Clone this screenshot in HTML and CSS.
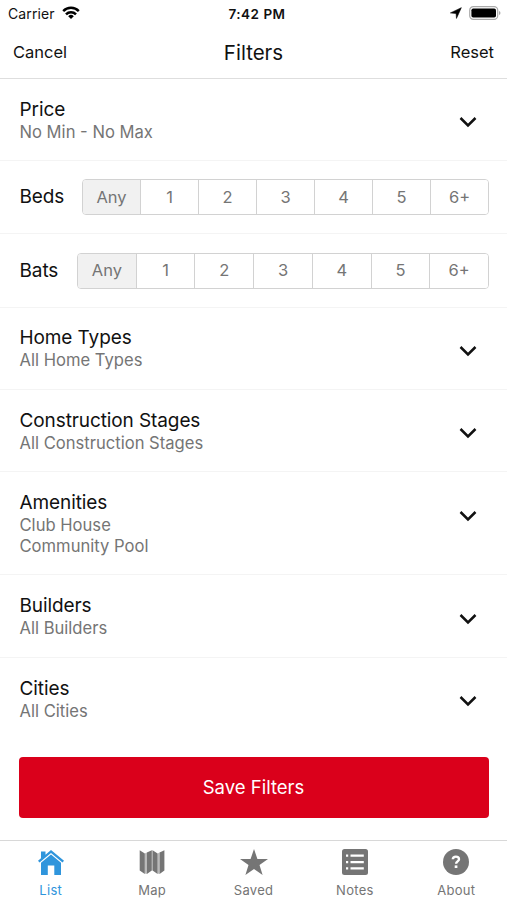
FILE: index.html
```html
<!DOCTYPE html>
<html lang="en">
<head>
    <meta charset="UTF-8">
    <meta name="viewport" content="width=device-width, initial-scale=1.0">
    <title>Filters</title>
    <link rel="stylesheet" href="styles.css">
</head>
<body>
    <div class="status-bar">
        <div class="carrier">
            <span>Carrier</span>
            <svg width="18" height="14" viewBox="0 0 18 14" fill="none" stroke="#000" stroke-width="2.5">
                <path d="M1.2 5.1a11 11 0 0 1 15.6 0"/>
                <path d="M4 8.3a7 7 0 0 1 10 0"/>
                <path d="M9 13 6.2 10.2a4 4 0 0 1 5.6 0z" fill="#000" stroke="none"/>
            </svg>
        </div>
        <div class="time">7:42 PM</div>
        <div class="indicators">
            <svg width="12" height="12" viewBox="0 0 13 12"><path d="M12.3.2 7 11.9 6.600 6.600.4 5.9z" stroke="#000" stroke-width=".6"/></svg>
            <svg width="32" height="14" viewBox="0 0 32 14">
                <rect x=".7" y=".7" width="28" height="12.6" rx="3.6" fill="#fff" stroke="#aaa" stroke-width="1.2"/>
                <rect x="2.4" y="2.4" width="24.6" height="9.2" rx="1.8"/>
                <path d="M30 5v4q1.5-.6 1.5-2T30 5z" fill="#aaa"/>
            </svg>
        </div>
    </div>

    <header class="navbar">
        <a class="nav-link">Cancel</a>
        <h1>Filters</h1>
        <a class="nav-link right">Reset</a>
    </header>

    <main class="filters">
        <div class="row">
            <div class="label">
                <h2>Price</h2>
                <p>No Min - No Max</p>
            </div>
            <svg class="chevron" viewBox="0 0 18 12"><path d="m1.5 2 7.5 7.5L16.5 2"/></svg>
        </div>
        <div class="row row-segment">
            <h2 class="beds">Beds</h2>
            <div class="segment">
                <button class="active">Any</button>
                <button>1</button>
                <button>2</button>
                <button>3</button>
                <button>4</button>
                <button>5</button>
                <button>6+</button>
            </div>
        </div>
        <div class="row row-segment">
            <h2 class="bats">Bats</h2>
            <div class="segment">
                <button class="active">Any</button>
                <button>1</button>
                <button>2</button>
                <button>3</button>
                <button>4</button>
                <button>5</button>
                <button>6+</button>
            </div>
        </div>
        <div class="row">
            <div class="label">
                <h2>Home Types</h2>
                <p>All Home Types</p>
            </div>
            <svg class="chevron" viewBox="0 0 18 12"><path d="m1.5 2 7.5 7.5L16.5 2"/></svg>
        </div>
        <div class="row">
            <div class="label">
                <h2>Construction Stages</h2>
                <p>All Construction Stages</p>
            </div>
            <svg class="chevron" viewBox="0 0 18 12"><path d="m1.5 2 7.5 7.5L16.5 2"/></svg>
        </div>
        <div class="row">
            <div class="label">
                <h2>Amenities</h2>
                <p>Club House</p>
                <p>Community Pool</p>
            </div>
            <svg class="chevron" viewBox="0 0 18 12"><path d="m1.5 2 7.5 7.5L16.5 2"/></svg>
        </div>
        <div class="row">
            <div class="label">
                <h2>Builders</h2>
                <p>All Builders</p>
            </div>
            <svg class="chevron" viewBox="0 0 18 12"><path d="m1.5 2 7.5 7.5L16.5 2"/></svg>
        </div>
        <div class="row">
            <div class="label">
                <h2>Cities</h2>
                <p>All Cities</p>
            </div>
            <svg class="chevron" viewBox="0 0 18 12"><path d="m1.5 2 7.5 7.5L16.5 2"/></svg>
        </div>
        <button class="save-button">Save Filters</button>
    </main>

    <nav class="tab-bar">
        <a class="tab active">
            <svg viewBox="0 0 26 26">
                <path d="M3 2.5h4.5v3.3L13 1l13 10.7-1.5 1.7L13 4 1.5 13.4 0 11.7l3-2.5z"/>
                <path d="M13 5.6 23 13.8V26h-6.7v-9.500H9.8V26H3V13.800z"/>
            </svg>
            <span>List</span>
        </a>
        <a class="tab">
            <svg viewBox="0 0 26 26">
                <path d="M.7 1.2 5.8 4.6V25L.7 21.6zM7.9 3.5l4.9-2.3v20.4L7.9 25zM13.6 1.2l5 3.4V25l-5-3.4zM20.6 3.5l4.8-2.3v20.400L20.6 25z"/>
                <path d="M5.8 4.6 7.9 3.5V25l-2.1-.6zM18.6 4.6l2-1.1V25l-2-.6zM12.8 1.2h.8v20.4h-.8z" opacity=".5"/>
            </svg>
            <span>Map</span>
        </a>
        <a class="tab">
            <svg class="star" viewBox="0 0 28 26"><path d="m14 0 3.4 9.9H28l-8.5 6.2L22.6 26 14 20l-8.6 6 3.1-9.9L0 9.9h10.6z"/></svg>
            <span>Saved</span>
        </a>
        <a class="tab">
            <svg viewBox="0 0 26 26">
                <rect width="26" height="26" rx="2.5"/>
                <path class="cutout" d="M4 5.5h2.2v2.2H4zM8.5 5.5h13.3v2.2H8.500zM4 12h2.2v2.2H4zM8.5 12h13.3v2.2H8.500zM4 18.3h2.2v2.2H4zM8.5 18.3h13.3v2.2H8.500z"/>
            </svg>
            <span>Notes</span>
        </a>
        <a class="tab">
            <svg viewBox="0 0 26 26">
                <circle cx="13" cy="13" r="13"/>
                <path class="question" d="M9.8 10.3c.1-3.6 6.3-3.5 6.2-.1 0 2.2-2.9 2.200-2.9 4.6"/>
                <rect class="cutout" x="11.7" y="16.4" width="2.7" height="2.6"/>
            </svg>
            <span>About</span>
        </a>
    </nav>
</body>
</html>
```
FILE: styles.css
```css
* {
    margin: 0;
    padding: 0;
    box-sizing: border-box;
}

body {
    font-family: Inter, Roboto, sans-serif;
    background: #fff;
    color: #111;
    height: 900px;
    display: flex;
    flex-direction: column;
    overflow: hidden;
}

button {
    font-family: inherit;
    border: none;
}

.status-bar {
    height: 26px;
    padding: 0 6px 0 8px;
    display: grid;
    grid-template-columns: 1fr auto 1fr;
    align-items: center;
    font-size: 14px;
}

.carrier {
    display: flex;
    align-items: center;
    gap: 7px;
    letter-spacing: 0.1px;
}

.time {
    font-size: 13.5px;
    font-weight: 600;
    letter-spacing: 0.5px;
    padding: 2px 0 0 5px;
}

.indicators {
    display: flex;
    justify-content: flex-end;
    align-items: center;
    gap: 7px;
}

.navbar {
    height: 53px;
    flex-shrink: 0;
    padding: 0 13px;
    border-bottom: 1px solid #dedede;
    display: grid;
    grid-template-columns: 1fr auto 1fr;
    align-items: center;
}

.navbar h1 {
    font-size: 20.5px;
    font-weight: 400;
}

.nav-link {
    font-size: 16.5px;
}

.nav-link.right {
    text-align: right;
}

.filters {
    flex: 1;
}

.row {
    padding: 18.9px 30px 17.7px 19.5px;
    border-bottom: 1px solid #f4f4f4;
    display: flex;
    align-items: flex-start;
    justify-content: space-between;
}

.row:nth-last-child(2) {
    border-bottom: none;
}

.row h2 {
    font-size: 19px;
    font-weight: 400;
    line-height: 24px;
    letter-spacing: -0.1px;
}

.row p {
    color: #757575;
    font-size: 16.6px;
    line-height: 20.8px;
}

.chevron {
    width: 18px;
    height: 12px;
    margin-top: 18.4px;
    fill: none;
    stroke: #111;
    stroke-width: 2.5;
}

.row-segment {
    height: 73.1px;
    padding: 0 18px 0 19.5px;
    align-items: center;
}

.beds {
    width: 62.5px;
}

.bats {
    width: 57.5px;
}

.segment {
    flex: 1;
    height: 36px;
    display: flex;
    border: 1px solid #d2d2d2;
    border-radius: 4px;
    overflow: hidden;
}

.segment button {
    flex: 1 1 0;
    background: #fff;
    color: #757575;
    font-size: 16.5px;
    padding-bottom: 1px;
}

.segment button + button {
    border-left: 1px solid #d2d2d2;
}

.segment .active {
    background: #f1f1f1;
}

.save-button {
    display: block;
    width: 470px;
    height: 61px;
    margin: 17.5px auto 0;
    border-radius: 4px;
    background: #da001b;
    color: #fff;
    font-size: 18.5px;
}

.tab-bar {
    height: 60px;
    flex-shrink: 0;
    border-top: 1px solid #d8d8d8;
    display: flex;
}

.tab {
    flex: 1;
    display: flex;
    flex-direction: column;
    align-items: center;
    padding-top: 8px;
    color: #757575;
    font-size: 13px;
    letter-spacing: 0.3px;
}

.tab svg {
    width: 26px;
    height: 26px;
    fill: currentColor;
    margin-bottom: 7px;
}

.tab .star {
    width: 28px;
}

.tab .cutout {
    fill: #fff;
}

.tab .question {
    fill: none;
    stroke: #fff;
    stroke-width: 2.4;
}

.tab.active {
    color: #2f95dc;
}
```
